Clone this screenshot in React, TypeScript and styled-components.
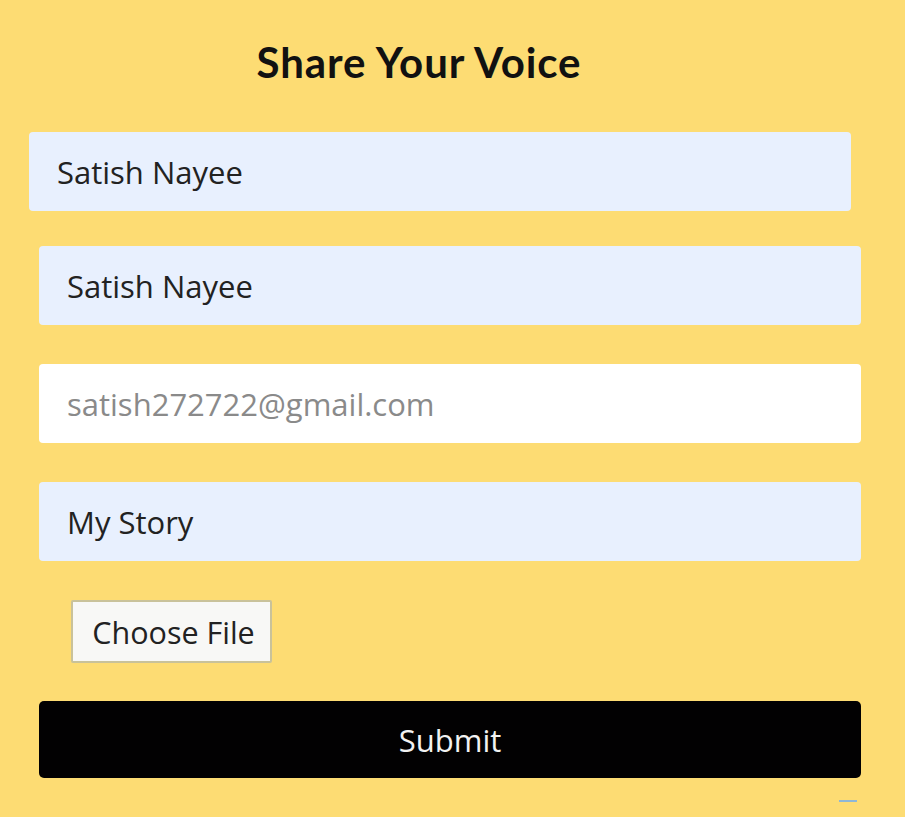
import React from 'react'
import styled, { createGlobalStyle } from 'styled-components'

const Global = createGlobalStyle`
  html, body {
    margin: 0;
    padding: 0;
    background: #fddc73;
  }
  body {
    font-family: "Open Sans", sans-serif;
  }
`

const Page = styled.div`
  width: 905px;
  height: 817px;
  background: #fddc73;
  box-sizing: border-box;
  padding: 38px 44px 0 39px;
  display: flex;
  flex-direction: column;
`

const Title = styled.h2`
  margin: 0 0 46px -62px;
  text-align: center;
  font-family: Lato, sans-serif;
  font-weight: 700;
  font-size: 42px;
  line-height: 48px;
  letter-spacing: 0.9px;
  color: #111;
`

const Form = styled.form`
  display: flex;
  flex-direction: column;
`

const Field = styled.input<{ $shift?: number; $filled?: boolean }>`
  box-sizing: border-box;
  width: 822px;
  height: 79px;
  margin: 0 0 ${(p) => (p.$shift ? 35 : 39)}px ${(p) => (p.$shift ? -p.$shift : 0)}px;
  padding: 0 28px;
  border: none;
  border-radius: 4px;
  outline: none;
  background: ${(p) => (p.$filled ? '#e8f0fe' : '#ffffff')};
  font-family: "Open Sans", sans-serif;
  font-size: 31px;
  color: #222;

  &::placeholder {
    color: #8a8a8a;
  }
`

const FileRow = styled.div`
  padding: 0 0 0 32px;
  margin: 0 0 38px;
`

const FileButton = styled.button`
  box-sizing: border-box;
  width: 201px;
  height: 63px;
  border: 2px solid #c9c29a;
  border-radius: 2px;
  background: #f8f8f6;
  font-family: "Open Sans", sans-serif;
  font-size: 30.5px;
  color: #222;
  padding: 0 0 0 4px;
`

const Submit = styled.button`
  box-sizing: border-box;
  width: 822px;
  height: 77px;
  border: none;
  border-radius: 5px;
  background: #020102;
  color: #f2f2f2;
  font-family: "Open Sans", sans-serif;
  font-size: 31px;
`

const Footer = styled.div`
  display: flex;
  justify-content: flex-end;
  padding: 22px 4px 0 0;
`

const Mark = styled.div`
  width: 18px;
  height: 2px;
  background: #8fb7d6;
`

export default function App() {
  return (
    <Page>
      <Global />
      <Title>Share Your Voice</Title>
      <Form onSubmit={(e) => e.preventDefault()}>
        <Field $shift={10} $filled readOnly value="Satish Nayee" />
        <Field $filled readOnly value="Satish Nayee" />
        <Field readOnly placeholder="satish272722@gmail.com" />
        <Field $filled readOnly value="My Story" />
        <FileRow>
          <FileButton type="button">Choose File</FileButton>
        </FileRow>
        <Submit type="submit">Submit</Submit>
      </Form>
      <Footer>
        <Mark />
      </Footer>
    </Page>
  )
}
